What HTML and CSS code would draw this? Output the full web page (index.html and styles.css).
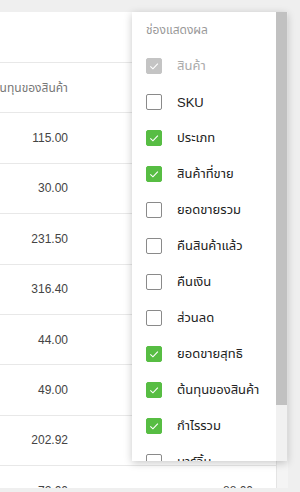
FILE: index.html
```html
<!DOCTYPE html>
<html lang="th">
<head>
  <meta charset="UTF-8">
  <meta name="viewport" content="width=device-width, initial-scale=1.0">
  <title>รายงานสินค้า</title>
  <link rel="stylesheet" href="styles.css">
</head>
<body>

<div class="card">
  <div class="table">
    <div class="toolbar"></div>
    <div class="row head">
      <div class="cell">ต้นทุนของสินค้า</div>
      <div class="cell wide">กำไรรวม</div>
    </div>
    <div class="row"><div class="cell">115.00</div><div class="cell wide">135.00</div></div>
    <div class="row"><div class="cell">30.00</div><div class="cell wide">40.00</div></div>
    <div class="row"><div class="cell">231.50</div><div class="cell wide">268.50</div></div>
    <div class="row"><div class="cell">316.40</div><div class="cell wide">363.60</div></div>
    <div class="row"><div class="cell">44.00</div><div class="cell wide">56.00</div></div>
    <div class="row"><div class="cell">49.00</div><div class="cell wide">61.00</div></div>
    <div class="row"><div class="cell">202.92</div><div class="cell wide">247.08</div></div>
    <div class="row"><div class="cell">72.00</div><div class="cell wide">88.00</div></div>
  </div>
  <div class="track"></div>
</div>

<!-- เมนูเลือกคอลัมน์ -->
<div class="columns-menu">
  <div class="menu-list">
    <p class="menu-title">ช่องแสดงผล</p>
    <label class="opt disabled"><span class="box on"><svg viewBox="0 0 16 16"><polyline points="3.8,8.4 6.8,11.2 12.4,5.2"/></svg></span>สินค้า</label>
    <label class="opt"><span class="box"></span>SKU</label>
    <label class="opt"><span class="box on"><svg viewBox="0 0 16 16"><polyline points="3.8,8.4 6.8,11.2 12.4,5.2"/></svg></span>ประเภท</label>
    <label class="opt"><span class="box on"><svg viewBox="0 0 16 16"><polyline points="3.8,8.4 6.8,11.2 12.4,5.2"/></svg></span>สินค้าที่ขาย</label>
    <label class="opt"><span class="box"></span>ยอดขายรวม</label>
    <label class="opt"><span class="box"></span>คืนสินค้าแล้ว</label>
    <label class="opt"><span class="box"></span>คืนเงิน</label>
    <label class="opt"><span class="box"></span>ส่วนลด</label>
    <label class="opt"><span class="box on"><svg viewBox="0 0 16 16"><polyline points="3.8,8.4 6.8,11.2 12.4,5.2"/></svg></span>ยอดขายสุทธิ</label>
    <label class="opt"><span class="box on"><svg viewBox="0 0 16 16"><polyline points="3.8,8.4 6.8,11.2 12.4,5.2"/></svg></span>ต้นทุนของสินค้า</label>
    <label class="opt"><span class="box on"><svg viewBox="0 0 16 16"><polyline points="3.8,8.4 6.8,11.2 12.4,5.2"/></svg></span>กำไรรวม</label>
    <label class="opt"><span class="box"></span>มาร์จิ้น</label>
  </div>
  <div class="scrollbar"><div class="thumb"></div></div>
</div>

</body>
</html>
```

FILE: styles.css
```css
* {
  box-sizing: border-box;
  margin: 0;
  padding: 0;
}

body {
  background: #efefef;
  font-family: 'Liberation Sans', 'Noto Sans Thai', Tahoma, 'DejaVu Sans', sans-serif;
  padding-top: 12px;
  position: relative;
  height: 492px;
  overflow: hidden;
}

.card {
  width: 288px;
  height: 476px;
  background: #fff;
  overflow: hidden;
  display: flex;
}

.table {
  width: 276px;
  flex: none;
}

.toolbar {
  height: 51px;
  border-bottom: 1px solid #e8e8e8;
}

.row {
  display: flex;
  height: 50.4px;
  border-bottom: 1px solid #e8e8e8;
  align-items: center;
  font-size: 12px;
  color: #444;
}

.row.head {
  color: #777;
}

.cell {
  width: 84px;
  padding-right: 16px;
  text-align: right;
  white-space: nowrap;
  direction: rtl;
  overflow: hidden;
  flex: none;
}

.cell.wide {
  width: 185px;
}

.track {
  width: 12px;
  background: #f4f4f4;
  border-left: 1px solid #e4e4e4;
}

.columns-menu {
  position: absolute;
  top: 12px;
  left: 132px;
  width: 155px;
  height: 449px;
  background: #fff;
  box-shadow: 0 2px 8px rgba(0,0,0,0.22);
  overflow: hidden;
  display: flex;
}

.menu-list {
  flex: 1;
  min-width: 0;
}

.scrollbar {
  width: 11px;
  flex: none;
  background: #f1f1f1;
}

.thumb {
  height: 393px;
  background: #c1c1c1;
}

.menu-title {
  height: 36px;
  line-height: 36px;
  padding-left: 14px;
  font-size: 12px;
  color: #999;
}

.opt {
  display: flex;
  align-items: center;
  height: 36px;
  padding-left: 14px;
  font-size: 13px;
  color: #222;
  white-space: nowrap;
  cursor: pointer;
}

.opt.disabled {
  color: #aaa;
}

.box {
  width: 16px;
  height: 16px;
  border: 1px solid #8a8a8a;
  border-radius: 2px;
  margin-right: 15px;
  flex: none;
  display: flex;
}

.box.on {
  background: #57bd43;
  border-color: #57bd43;
}

.disabled .box.on {
  background: #c4c4c4;
  border-color: #c4c4c4;
}

.box svg {
  width: 14px;
  height: 14px;
  fill: none;
  stroke: #fff;
  stroke-width: 1.3;
}
```
